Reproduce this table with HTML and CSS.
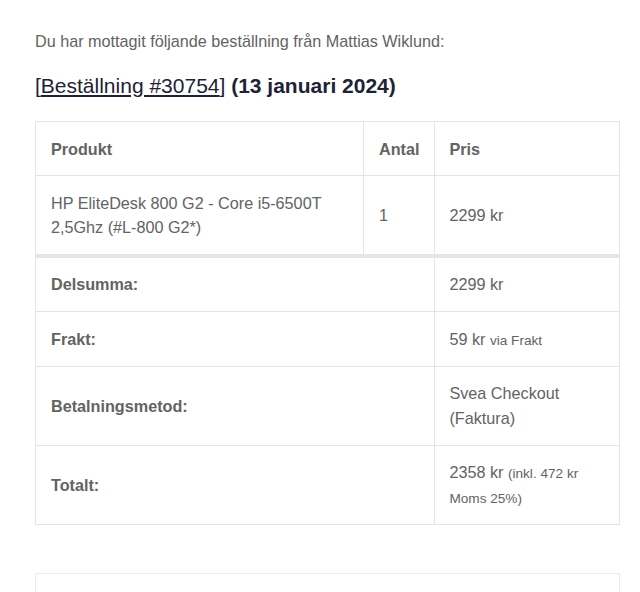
FILE: index.html
```html
<!DOCTYPE html>
<html lang="sv">
<head>
<meta charset="utf-8">
<link rel="stylesheet" href="styles.css">
</head>
<body>
<div class="wrap">
  <p class="intro">Du har mottagit följande beställning från Mattias Wiklund:</p>
  <h2 class="order-title">[<a class="order-link" href="#">Beställning #30754</a>] <b>(13 januari 2024)</b></h2>
  <table class="order">
    <thead>
      <tr>
        <th class="c1">Produkt</th>
        <th class="c2">Antal</th>
        <th class="c3">Pris</th>
      </tr>
    </thead>
    <tbody>
      <tr>
        <td class="c1">HP EliteDesk 800 G2 - Core i5-6500T 2,5Ghz (#L-800 G2*)</td>
        <td class="c2">1</td>
        <td class="c3">2299 kr</td>
      </tr>
    </tbody>
    <tfoot>
      <tr class="first">
        <th colspan="2">Delsumma:</th>
        <td>2299 kr</td>
      </tr>
      <tr class="tall">
        <th colspan="2">Frakt:</th>
        <td>59 kr <small>via Frakt</small></td>
      </tr>
      <tr>
        <th colspan="2">Betalningsmetod:</th>
        <td>Svea Checkout (Faktura)</td>
      </tr>
      <tr>
        <th colspan="2">Totalt:</th>
        <td>2358 kr <small>(inkl. 472 kr Moms 25%)</small></td>
      </tr>
    </tfoot>
  </table>
  <div class="next-box"></div>
</div>
</body>
</html>
```

FILE: styles.css
```css
html, body {
  margin: 0;
  padding: 0;
  background: #ffffff;
}
body {
  font-family: "Liberation Sans", Arial, Helvetica, sans-serif;
  color: #636363;
  font-size: 16.2px;
}
.wrap {
  padding: 29px 20px 0 35px;
}
.intro {
  margin: 0;
  line-height: 24px;
}
.order-title {
  margin: 20px 0 22px;
  font-size: 21px;
  line-height: 26px;
  font-weight: normal;
  color: #1e2236;
}
.order-title b {
  font-weight: bold;
}
.order-link {
  color: #1e2236;
  text-decoration: underline;
}
.order {
  width: 585px;
  border-collapse: collapse;
  border: 1px solid #e5e5e5;
}
.order th, .order td {
  border: 1px solid #e5e5e5;
  padding: 14.5px 15px;
  line-height: 24px;
  text-align: left;
  vertical-align: middle;
  color: #636363;
}
.order th {
  font-weight: bold;
}
.order td {
  font-weight: normal;
}
.order .c1 { width: 297px; }
.order .c2 { width: 40px; }
.order tbody td { padding: 15px; }
.order thead .c3,
.order tbody .c3 {
  padding-left: 14px;
}
.order tfoot th,
.order tfoot td {
  padding: 14px 15px;
  line-height: 25px;
}
.order tfoot td {
  padding-left: 14px;
}
.order tfoot tr.tall th,
.order tfoot tr.tall td {
  padding-top: 14.5px;
  padding-bottom: 14.5px;
}
.order tfoot tr.first th,
.order tfoot tr.first td {
  border-top: 4px solid #e5e5e5;
}
.order small {
  font-size: 13.6px;
  line-height: 1;
}
.next-box {
  margin-top: 48px;
  width: 583px;
  height: 40px;
  border: 1px solid #ececec;
}
```
